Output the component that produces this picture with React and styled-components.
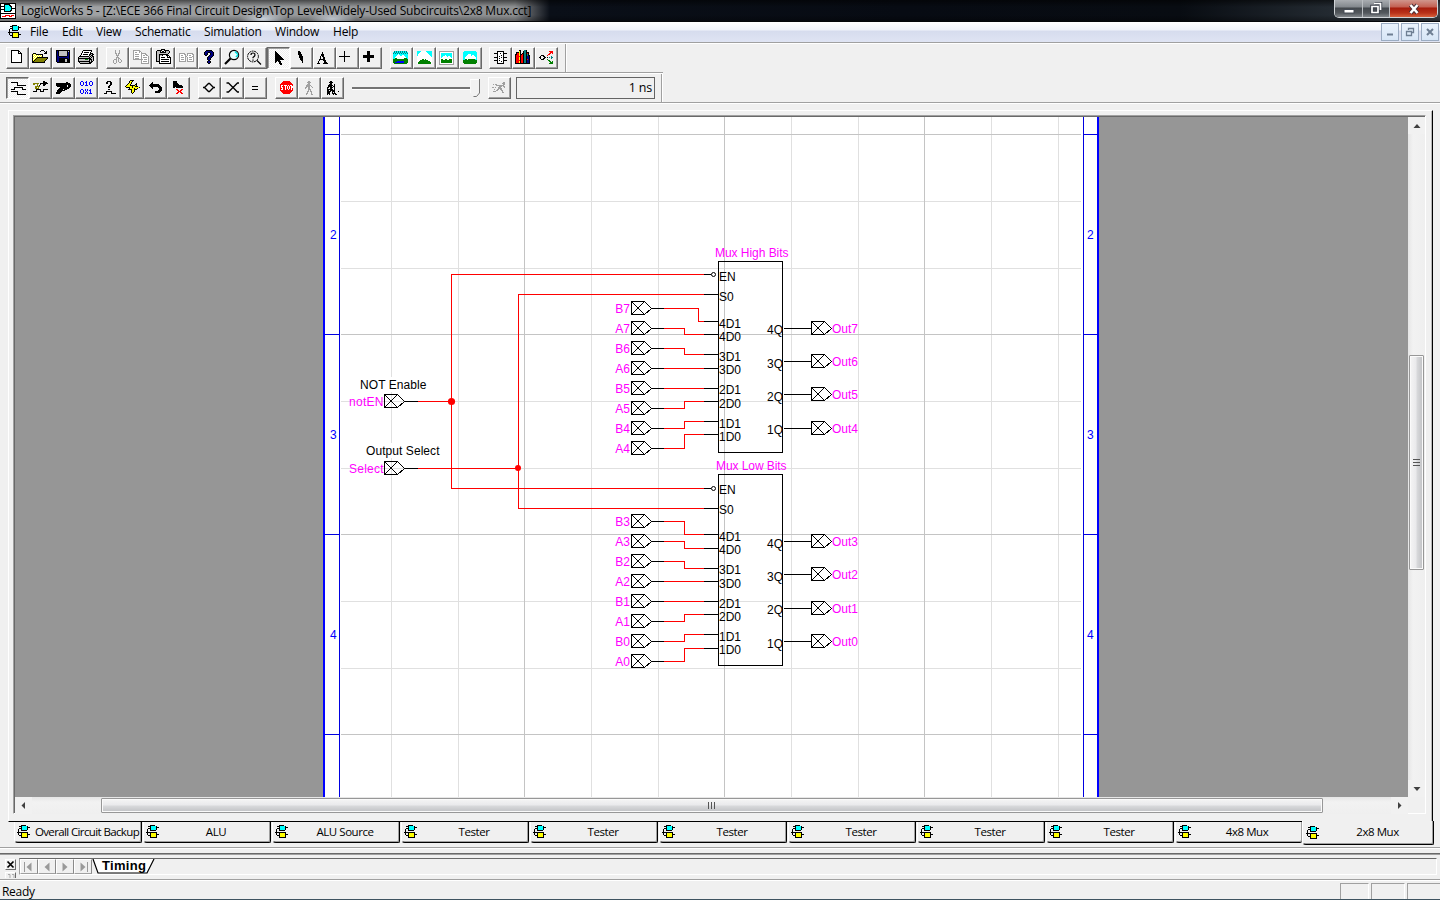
import React from "react";
import styled, { createGlobalStyle, css } from "styled-components";

const Global = createGlobalStyle`
  html, body { margin: 0; padding: 0; background: #f0f0f0; overflow: hidden; }
  * { box-sizing: border-box; }
  svg { display: block; flex: none; }
`;

const UI = `"Open Sans", "Noto Sans", sans-serif`;
const SANS = `"Liberation Sans", Arial, sans-serif`;

/* ---------- window frame ---------- */
const Window = styled.div`
  width: 1440px; height: 900px; display: flex; flex-direction: column;
  background: #f0f0f0; color: #000; overflow: hidden; font-family: ${UI};
`;
const TitleBar = styled.header`
  height: 22px; flex: none; display: flex; align-items: flex-start;
  border-bottom: 1px solid #05070a;
  background:
    radial-gradient(ellipse 24px 7px at 263px 19px, #dfe9f4cc, transparent),
    radial-gradient(ellipse 24px 7px at 332px 19px, #dfe9f4aa, transparent),
    linear-gradient(to bottom, #0008 0, #0000 7px, #0000 15px, #0005 21px),
    linear-gradient(to right, #a3a5a7 0, #97999b 300px, #8e9092 515px, #4a4d52 533px, #0a0f18 550px, #070b13 900px, #080c12 1180px, #232a31 1330px, #3a4148 1440px);
`;
const AppIcon = styled.svg`margin-top: 3px;`;
const TitleText = styled.div`
  font-size: 12px; line-height: 21px; letter-spacing: -0.18px; white-space: pre; padding-left: 5px; flex: 1;
`;
const Caption = styled.div`
  display: flex; height: 18px; margin-right: 2px; border: 1px solid #d0d4d8; border-top: 0;
  border-radius: 0 0 5px 5px; overflow: hidden;
`;
const CaptionButton = styled.div`
  width: ${p => p.$w}px; height: 17px; display: flex; align-items: center; justify-content: center;
  border-right: ${p => (p.$close ? 0 : "1px solid #b9bdc1")};
  background: ${p => p.$close
    ? "linear-gradient(#d0968c 0, #c36052 7px, #a61c0c 8px, #b8321a 13px, #d8603c 17px)"
    : "linear-gradient(#a9adb1 0, #83888d 7px, #43484d 8px, #53585d 13px, #82878b 17px)"};
`;
const MenuBar = styled.nav`
  height: 22px; flex: none; display: flex; align-items: center; padding: 0 1px 2px 8px;
  border-bottom: 1px solid #fff; box-shadow: inset 0 -1px 0 #a0a0a0;
  background: linear-gradient(#fff 0, #f0f3fa 8px, #d6dcee 9px, #dfe4f3 20px);
`;
const MenuItem = styled.div`
  font-size: 12px; line-height: 18px; width: ${p => p.$w}px; letter-spacing: -0.2px; white-space: nowrap;
`;
const MdiButton = styled.div`
  width: 18px; height: 18px; margin-left: 2px; border: 1px solid #9bacc2; background: linear-gradient(#e9f2fc, #d7e6f6);
  display: flex; align-items: center; justify-content: center;
`;
const Fill = styled.div`flex: 1;`;

/* ---------- tool bars ---------- */
const Toolbar = styled.div`
  width: ${p => p.$w}px; height: 30px; flex: none; display: flex; padding: 3px 0 0 6px;
  border-bottom: 1px solid #fff; box-shadow: inset 0 -1px 0 #a0a0a0;
`;
const ToolbarEnd = styled.div`
  width: 2px; height: 28px; margin: -3px 0 0 ${p => p.$gap}px; background: linear-gradient(to right, #a0a0a0 50%, #fff 50%);
`;
const Group = styled.div`display: flex; margin-right: ${p => p.$gap ?? 8}px;`;
const ToolButton = styled.div`
  width: 23px; height: 22px; border-style: solid; border-width: 1px;
  border-color: #fff #696969 #696969 #fff; box-shadow: inset -1px -1px 0 #a0a0a0; background: #f0f0f0;
  svg { margin: -1px; }
  ${p => p.$on && css`
    border-color: #696969 #fff #fff #696969; box-shadow: inset 1px 1px 0 #a0a0a0;
    background: repeating-conic-gradient(#fff 0 25%, #f0f0f0 0 50%) 0 0 / 2px 2px;
  `}
`;
const SliderTrack = styled.div`
  width: 118px; height: 3px; margin: 10px 0 0 0; border-top: 2px solid #737373; border-bottom: 1px solid #fff;
`;
const DelayField = styled.div`
  width: 139px; height: 22px; border: 1px solid #646464; margin-left: 5px; padding-right: 2px; text-align: right;
  font-size: 12.5px; line-height: 19px; letter-spacing: -0.2px;
`;

/* ---------- document area ---------- */
const Workspace = styled.main`height: 743px; flex: none; padding: 6px 0 0 8px;`;
const Frame = styled.section`
  width: 1425px; height: 712px; padding: 4px; border: 1px solid #fff;
  border-right-color: #000; border-bottom-color: #000; box-shadow: inset -1px 0 0 #b8b8b8;
`;
const Sunken = styled.div`
  width: 1413px; height: 699px; padding: 1px 0 0 1px; border: 1px solid;
  border-color: #a0a0a0 #fff #fff #a0a0a0; box-shadow: inset 1px 1px 0 #696969;
  display: grid; grid-template: 680px 17px / 1393px 17px; background: #f0f0f0;
`;
const ScrollV = styled.div`
  background: linear-gradient(to right, #e6e6e6, #f2f2f2 30%, #efefef); display: flex; flex-direction: column; align-items: center;
`;
const ScrollH = styled.div`
  background: linear-gradient(#e6e6e6, #f2f2f2 30%, #efefef); display: flex; align-items: center;
`;
const Gap = styled.div`flex: 0 0 ${p => p.$s}px;`;
const Thumb = styled.div`
  display: flex; align-items: center; justify-content: center; border: 1px solid #979797; border-radius: 1px;
  box-shadow: inset 0 0 0 1px #fafafa; width: ${p => p.$w}px; height: ${p => p.$h}px;
  background: linear-gradient(${p => (p.$v ? "to right" : "to bottom")}, #f5f5f5 0, #e9e9eb 48%, #d9dadc 52%, #c0c1c4 100%);
`;
const ArrowCell = styled.div`
  width: 17px; height: 17px; display: flex; align-items: center; justify-content: center; background: #f1f1f1;
`;
const Tabs = styled.div`display: flex; padding-left: 6px; height: 24px;`;
const Tab = styled.div`
  width: 128px; height: 21px; margin-right: 1px; display: flex; align-items: center; padding: 0 0 1px 2px;
  border: 1px solid #000; border-top: 0; border-left-color: #fff; border-radius: 0 0 2px 4px;
  box-shadow: inset -1px -1px 0 #a0a0a0;
  ${p => p.$last && css`border-right: 0; width: 127px; margin-right: 0; padding-right: 2px;`}
  ${p => p.$active && css`
    width: 132px; height: 24px; margin: -1px 0 0; padding-left: 3px; background: #f0f0f0;
  `}
`;
const TabLabel = styled.span`
  flex: 1; text-align: center; font-size: 11.5px; line-height: 18px; white-space: nowrap;
  margin-left: 3px; letter-spacing: ${p => p.$ls}px;
`;

/* ---------- docked pane and status ---------- */
const Dock = styled.div`
  height: 34px; flex: none; border-top: 1px solid #a0a0a0;
  padding: 5px 3px 0 5px; border-bottom: 1px solid #fff; box-shadow: inset 0 1px 0 #fff, inset 0 -1px 0 #a0a0a0;
`;
const DockLine = styled.div`height: 2px; margin: 0 -3px 0 -5px; background: linear-gradient(#696969 50%, #a0a0a0 50%);`;
const DockRow = styled.div`display: flex; margin-top: 3px; height: 20px;`;
const Grips = styled.div`width: 14px; padding-top: 1px; height: 20px; overflow: hidden;`;
const SmallButton = styled.div`
  width: 11px; height: ${p => p.$h || 11}px; border: 1px solid; border-color: #fff #696969 #696969 #fff; margin-bottom: 2px;
`;
const PaneBody = styled.div`
  flex: 1; display: flex; height: 17px; border: 1px solid #a0a0a0; border-top-color: #696969;
  border-right-color: #fff; border-bottom-color: #fff;
`;
const NavButton = styled.div`
  width: 18px; height: 15px; border: 1px solid; border-color: #fff #8a8a8a #a0a0a0 #fff; display: flex; align-items: center; justify-content: center;
`;
const StatusBar = styled.footer`
  height: 19px; flex: none; display: flex; padding: 2px 0 0 2px; border-bottom: 1px solid #3e5360; font-size: 12px; line-height: 17px;
  letter-spacing: -0.3px;
`;
const StatusCell = styled.div`
  width: ${p => p.$w}px; height: 16px; margin-right: ${p => p.$mr ?? 2}px; border: 1px solid #a0a0a0; border-right-color: #fff; border-bottom: 0;
`;

/* ---------- pixel icons ---------- */
const COLORS = {
  k: "#000", w: "#fff", y: "#ffff00", o: "#808000", n: "#000080", g: "#a0a0a0", r: "#ff0000",
  c: "#00ffff", G: "#008000", b: "#0000ff", t: "#008080", s: "#c0c0c0",
};
function Pixels({ rows, x = 0, y = 0 }) {
  const paths = {};
  rows.forEach((row, j) => {
    for (let i = 0; i < row.length;) {
      const ch = row[i];
      let n = 1;
      while (row[i + n] === ch) n++;
      if (COLORS[ch]) paths[ch] = (paths[ch] || "") + `M${x + i} ${y + j}h${n}v1h-${n}z`;
      i += n;
    }
  });
  return <g shapeRendering="crispEdges">{Object.entries(paths).map(([c, d]) => <path key={c} d={d} fill={COLORS[c]} />)}</g>;
}
const Glyph = ({ children }) => <svg width="23" height="22" viewBox="0 0 23 22">{children}</svg>;

const GATES = [
  "....kkkkk....",
  "..kkkccccck..",
  "....kccccckkk",
  "..kkkccccck..",
  ".k..kccccck..",
  ".k..kkkkkk...",
  ".k...........",
  "kkkkkkkkkkk..",
  ".k..kyyyyyk..",
  ".k..kyyyyykkk",
  "..kkkyyyyyk..",
  "....kyyyyyk..",
  "....kkkkkkk..",
];
const GateIcon = () => <svg width="13" height="13" viewBox="0 0 13 13"><Pixels rows={GATES} /></svg>;

const NEW = [
  "kkkkkkkk...", "kwwwwwwkk..", "kwwwwwwkwk.", "kwwwwwwkkkk", "kwwwwwwwwwk", "kwwwwwwwwwk", "kwwwwwwwwwk",
  "kwwwwwwwwwk", "kwwwwwwwwwk", "kwwwwwwwwwk", "kwwwwwwwwwk", "kwwwwwwwwwk", "kkkkkkkkkkk",
];
const OPEN = [
  ".........kkk....", "........k...k.k.", ".............kk.", ".kkk........kkk.", "kywykkkkkkk.....", "kwywywywywk.....",
  "kywywywywyk.....", "kwywykkkkkkkkkkk", "kywykooooooooook", "kwykooooooooook.", "kykooooooooook..", "kkooooooooook...", "kkkkkkkkkkkkk...",
];
const SAVE = [
  "kkkkkkkkkkkkkk", "knkssssssssksk", "knkssssssssknk", "knkssssssssknk", "knkssssssssknk", "knkssssssssknk", "knnkkkkkkkknnk",
  "knnnnnnnnnnnnk", "knnkkkkkkkkknk", "knnkkkkkksskkk", "knnkkkkkksskkk", "knnkkkkkksskkk", ".kkkkkkkkkkkkk",
];
const PRINT = [
  ".....kkkkkkkkk..", "....kwwwwwwwwk..", "....kwkkkkkwk...", "...kwwwwwwwwkkk.", "...kwkkkkkwkkskk", "..kwwwwwwwwkskk.",
  ".kkkkkkkkkkskskk", "kssssssssssksksk", "kkkkkkkkkkkkkssk", "kssssssGGGskkksk", "kssssssssssksksk", "kkkkkkkkkkkkskk.", ".kssssssssskkk..", "..kkkkkkkkkkk...",
];
const CUT = [
  "...g...g..", "...g...g..", "...g...g..", "...gg.gg..", "....g.g...", "....ggg...", ".....g....", "....ggg...", "....g.gg..",
  "..ggg.g.g.", ".g..g.g..g", ".g..g.g..g", ".g..g..gg.", "..gg......",
];
const COPY = [
  "ggggggg.........", "gwwwwwgg........", "gwggwwgwg.......", "gwwwwwwwggggg...", "gwggggwwgwwwgg..", "gwwwwwwwgwggwgg.",
  "gwggggwwgwwwwwwg", "gwwwwwwwgwggggwg", "gwggggwwgwwwwwwg", "ggggggggggwgggwg", "........gwwwwwwg", "........gwggggwg", "........gwwwwwwg", "........gggggggg",
];
const PASTE = [
  ".....kkkk.......", ".kkkkk..kkkkk...", "ksssk.kk.ksssk..", "kssskkkkkksssk..", "ksssssssssssk...", "ksskkkkkkkkk....", "kssksskwwwkkk...",
  "ksskwwwwwwwkwk..", "ksskwkkkkwwkkkk.", "ksskwwwwwwwwwwk.", "ksskwkkkkkkkkwk.", "ksskwwwwwwwwwwk.", "kkkkwkkkkkkkkwk.", "...kwwwwwwwwwwk.", "...kkkkkkkkkkkk.",
];
const PAIR = [
  "gggggg..gggggg..", "gwwwwgg.gwwwwgg.", "gwggwwg.gwggwwg.", "gwwwwwggwwwwwgg.", "gwgggwg.gwgggwg.", "gwwwwwg.gwwwwwg.",
  "gwgggwg.gwgggwg.", "gwwwwwg.gwwwwwg.", "ggggggg.ggggggg.",
];
const HELP = [
  "..kkkkkk..", ".knnnnnnk.", "knnnkknnnk", "knnk..knnk", "knnk..knnk", ".kk..knnnk", "....knnnk.", "...knnnk..",
  "...knnk...", "...knnk...", "....kk....", "...knnk...", "...knnk...", "....kk....",
];
const ARROW = [
  "k........", "kk.......", "kkk......", "kkkk.....", "kkkkk....", "kkkkkk...", "kkkkkkk..", "kkkkkkkk.", "kkkkkkkkk",
  "kkkkk....", "kk.kkk...", "k...kk...", "....kkk..", ".....kk..",
];
const PEN = ["kk....", "kkk...", "kkk...", "kkkk..", ".kkk..", ".kkkk.", ".kkkk.", "..kkk.", "..kkk.", "...kk.", "....k.", "....k."];
const BIGA = [
  ".....k.....", ".....k.....", "....kkk....", "....kkk....", "...k.kk....", "...k..kk...", "...k..kk...", "..kkkkkk...", "..k...kkk..", ".k.....kk..", ".k.....kkk.", "kkk...kkkkk",
];
const PLUS = [".....k.....", ".....k.....", ".....k.....", ".....k.....", ".....k.....", "kkkkkkkkkkk", ".....k.....", ".....k.....", ".....k.....", ".....k.....", ".....k....."];
const BOLDPLUS = ["....kkk....", "....kkk....", "....kkk....", "....kkk....", "kkkkkkkkkkk", "kkkkkkkkkkk", "kkkkkkkkkkk", "....kkk....", "....kkk....", "....kkk....", "....kkk...."];
const SCENE1 = [
  ".tctctctctctct.", "ctctctctctctctc", "tctctctctctctct", "cccccwccccccccc", "ccccwwwccwwcccc", "cccwwwwwwwwwccc", "ccwwwwwwwwwwwcc", "ccGGwwwwwwwGGGc",
  "GGGGGGGGGGGGGGG", "GGGGGGGGGGGGGGG", "GGGGbbbbbbbGGGG", "GGbbbbbbbbbGGGG", ".GGGGGGGGGGGGG.",
];
const SCENE2 = [
  "ccccwwwwwcccccc", "cccwwwwwwwccccc", "ccwwwwwwwwwcccc", "cwwwwwwwwwwwccc", "cwwwwwwwwwwwwcc", "wwwwwwwwwwwwwwc", "wwwwwwwwwwwwwww", "wwwwwwwwwwwwwww",
  "wwwwwGGwGwwwwww", "wwwGGGGGGGGwwww", "wwGGGGGGGGGGGww", "wGGGGGGGGGGGGGw", "wGGGGGGGGGGGGGw",
];
const SCENE3 = [
  "ggggggggggggggg", "gwwwwwwwwwwwwwg", "gwcccccccccccwg", "gwcccccccccccwg", "gwccccwccccccwg", "gwccwwwwcwwccwg", "gwcwwwwwwwwwcwg", "gwwwwwwwwwwwwwg",
  "gwGGwwGGwwGGGwg", "gwGGGGGGGGGGGwg", "gwGGGGGGGGGGGwg", "gwGGGGGGGGGGGwg", "gwwwwwwwwwwwwwg", "ggggggggggggggg",
];
const SCENE4 = [
  ".cccccccccccc.", "cccccccccccccc", "cccccccccccccc", "cccccwwwcccccc", "ccccwwwwcwwccc", "cccwwwwwwwwwcc", "ccwwwwwwwwwwwc", "ccwwwwwwwwwwwc",
  "ccGGwGGGGGGGcc", "GGGGGGGGGGGGGG", "GGGGGGGGGGGGGG", "GGGGGGGGGGGGGG", ".GGGGGGGGGGGG.",
];
const CHIP = [
  "...kkkkkkk...", "...kwwwwwk...", "kkkkwwkwwkkkk", "...kwwwwwk...", "...kwwwkwk...", "...kwkwwwk...", "kkkkwwwkwkkkk", "...kwkwwwk...",
  "...kwwwwwk...", "kkkkwkwwwkkkk", "...kwwwkwk...", "...kwwwwwk...", "...kkkkkkk...",
];
const BOOKS = [
  "....kk...ttk....", "....yk..kttk....", ".kkkyk..kttkkk..", ".krryk.kkttkrk..", "kkrrykkrkttktk..", "krrrykrrkttktkk.", "krrrrkrrkttknnk.",
  "krrrykrrkttknnk.", "krrrykrrkttknnk.", "krrrykrrkttkrnk.", "krrrrkrrkttknnk.", "krrrykrrkttknnk.", "krrrykrrkttknnk.", "kkkkkkkkkkkkkkk.",
];
const SPLIT = [
  "..........rrrr", "...........rrr", "..........rr.r", ".........rr...", "..kkk...r.....", ".k..kk......t.", "kk...kk.k.t.tt", ".k..kk......t.",
  "..kkk...G.....", ".........GG...", "..........GG.G", "...........GGG", "..........GGGG",
];
const WAVE = [
  "kkkkkkk........", "......k........", "......k........", "......kkkkkkkkk", "...............", "...kkkkkkkkk...", "...k.......k...",
  "kkkk.......kkkk", "...............", "kkkkkkk........", "......k........", "......k........", "......kkkkkkkkk",
];
const PROBE = [
  "..........kk...", "..........kkkk.", "oooooo.kkkkkkkk", "oo..o..k..kkk..", "....o.k...kk...", "..ooooo........", "..oo.o.........", "..oooo.........",
  "...kkkkk..kkkkk", "...k...k..k....", "kkkk...kkkk....", "...............",
];
const GUN = [
  "..........kk...", "kkkkkkkkkkkkkk.", "kkkkkkkkkkkkkkk", "kkkkkkkkkkk.kkk", ".kkkkkkkkkk.kkk", "....kkkkkkkkkk.", "...kkkkkkkkkk..",
  "..kkkkk.kkk....", ".kkkkkkkk......", ".kkkkk.........", "kkkkk..........", "kkkk...........",
];
const BITS = [
  ".bb...b...bb.", "b..b.bb..b..b", "b..b..b..b..b", "b..b..b..b..b", ".bb..bbb..bb.", ".............", ".............", ".............",
  ".bb..b.b..b..", "b..b.b.b.bb..", "b..b..b...b..", "b..b.b.b..b..", ".bb..b.b.bbb.",
];
const WHAT = [
  "...kkkk.....", "..kk..kk....", "..kk..kk....", "......kk....", ".....kk.....", "....kk......", "....kk......", "............",
  "....kk......", "............", "..kkkkkk....", "..k....k....", "kkk....kkkkk",
];
const BOLT = [
  ".....kkkk......", "....kyyk.......", "....kyk........", "...kyyk....k...", "..kyyk....kk...", ".kyyykkkkkyk...", "kyyyyyykyykkk.", ".kkkkyykyyyyyyk",
  "....kyyyykyyk..", "...kkkkyykkk...", "......kyyk.....", "......kyyk.....", "......kyk......", ".......k.......",
];
const UNDO = [
  "...k.........", "..kk.........", ".kkkkkkkkk...", "kkkkkkkkkkk..", ".kkkkkkkkkkk.", "..kk.....kkkk", "...k......kkk", "..........kkk", ".........kkkk", "......kkkkkk.", "......kkkkk..",
];
const BOOT = [
  "kkkk........", "kkkk........", "kkkkk.......", "kkkkkk......", "kkkkkkkkk...", "kkkkkkkkkk..", "kk.kkkkkkk..", "............", "...rr...rr..", "....rr.rr...", ".....rrr....", "....rr.rr...", "...rr...rr..",
];
const STOP = [
  "...rrrrrrr...", "..rrrrrrrrr..", ".rrrrrrrrrrr.", "rrrrrrrrrrrrr", "rwwrwwwrwrwwr", "rwrrrwrwrwrww", "rwwrrwrwrwrww", "rrwrrwrwrwrwr",
  "rwwrrwrrwrrwr", "rrrrrrrrrrrrr", ".rrrrrrrrrrr.", "..rrrrrrrrr..", "...rrrrrrr...",
];
const WALK = [
  "...gg...", "..gggg..", "...gg...", "..ggg...", ".ggggg..", ".gggg.g.", "gg.gg..g", "g..gg...", "...ggg..", "...g.g..", "..gg.gg.", "..g...g.", ".gg...g.", ".g....gg",
];
const WALKB = [
  "...kk.......", "..kkkk......", "...kk.......", "..kkk..k....", ".kkkkk.k....", ".kkkk.kk....", "kk.kkk.k....", "k..kk..k....", "kkkkkk.k....",
  "kk.kkkkk....", "kkkk.kkk...k", "kkk..k.k....", "kkk..kkkk...", "k.k...k.kk..",
];
const RUN = [
  "...........gg..", "..........ggg..", ".g.gg......gg..", "....gggggggg...", ".......ggg.gg..", "gg.g..ggg...g..", "......gggg.....", "..g..gg.gg.....", "....gg...gg....", ".ggg......g....", "..........gg...",
];

const Zoomer = () => (
  <Glyph>
    <circle cx="13" cy="8" r="4.6" fill="#e8ffff" stroke="#000" strokeWidth="1.2" />
    <path d="M14 4.5l3 3M15 10l2-2" stroke="#00e0e0" strokeWidth="1.6" />
    <path d="M9.5 11.5L4 17" stroke="#000" strokeWidth="2.2" />
  </Glyph>
);
const ZoomHelp = () => (
  <Glyph>
    <circle cx="9" cy="9.5" r="5.4" fill="none" stroke="#000" strokeDasharray="2 .6" />
    <path d="M13 13.5l4 4M7 8q0-2 2-2t2 2q0 1-2 2.5v.8M9 12.5v1.2" fill="none" stroke="#000" strokeWidth="1.2" />
  </Glyph>
);
const bmp = (rows, x, y) => <Glyph><Pixels rows={rows} x={x} y={y} /></Glyph>;

const FILE_TOOLS = [bmp(NEW, 5, 3), bmp(OPEN, 3, 3), bmp(SAVE, 4, 3), bmp(PRINT, 3, 3)];
const EDIT_TOOLS = [
  bmp(CUT, 6, 3), bmp(COPY, 4, 3), bmp(PASTE, 4, 2), bmp(PAIR, 4, 6), bmp(HELP, 6, 3), <Zoomer />, <ZoomHelp />,
  bmp(ARROW, 8, 4), bmp(PEN, 8, 4), bmp(BIGA, 4, 5), bmp(PLUS, 3, 4), bmp(BOLDPLUS, 4, 4),
];
const VIEW_TOOLS = [bmp(SCENE1, 3, 4), bmp(SCENE2, 4, 4), bmp(SCENE3, 3, 4), bmp(SCENE4, 4, 4)];
const PART_TOOLS = [bmp(CHIP, 5, 4), bmp(BOOKS, 3, 3), bmp(SPLIT, 4, 4)];
const SIM_TOOLS = [bmp(WAVE, 5, 5), bmp(PROBE, 4, 4), bmp(GUN, 4, 5), bmp(BITS, 5, 4), bmp(WHAT, 6, 4), bmp(BOLT, 4, 3), bmp(UNDO, 5, 5), bmp(BOOT, 6, 4)];
const TRACE_TOOLS = [
  <Glyph key="d"><path d="M5 10.5h1.5l4-4h1l4 4-4 4h-1l-4-4M15.5 10.5H17" fill="none" stroke="#000" strokeWidth="1.3" /></Glyph>,
  <Glyph key="x"><path d="M5.500 6h2l4.500 4.500L16.500 6h1.500M5.500 15h2l4.500-4.500 4.500 4.500h1.500" fill="none" stroke="#000" strokeWidth="1.3" /></Glyph>,
  <Glyph key="e"><path d="M8 9.5h6M8 12.5h6" stroke="#000" shapeRendering="crispEdges" /></Glyph>,
];
const RUN_TOOLS = [bmp(STOP, 5, 4), bmp(WALK, 7, 4), bmp(WALKB, 6, 4)];

const Buttons = ({ icons, gap, pressed }) => (
  <Group $gap={gap}>
    {icons.map((icon, i) => <ToolButton key={i} $on={i === pressed}>{icon}</ToolButton>)}
  </Group>
);

/* ---------- schematic ---------- */
const HIGH = {
  title: "Mux High Bits", tx: 715, tw: 73.5, ty: 257, top: 261, en: 274, enText: 281, sel: 294, selText: 301,
  ins: [
    ["B7", 308, 321, "4D1", 328, 698], ["A7", 328, 334, "4D0", 341], ["B6", 348, 354, "3D1", 361], ["A6", 368, 368, "3D0", 374],
    ["B5", 388, 388, "2D1", 394], ["A5", 408, 401, "2D0", 408], ["B4", 428, 421, "1D1", 428], ["A4", 448, 434, "1D0", 441],
  ],
  outs: [["Out7", 328, "4Q", 334], ["Out6", 361, "3Q", 368], ["Out5", 394, "2Q", 401], ["Out4", 428, "1Q", 434]],
};
const LOW = {
  title: "Mux Low Bits", tx: 716, tw: 70.5, ty: 470, top: 474, en: 488, enText: 494, sel: 508, selText: 514,
  ins: [
    ["B3", 521, 534, "4D1", 541], ["A3", 541, 548, "4D0", 554], ["B2", 561, 568, "3D1", 574], ["A2", 581, 581, "3D0", 588],
    ["B1", 601, 601, "2D1", 608], ["A1", 621, 614, "2D0", 621], ["B0", 641, 634, "1D1", 641], ["A0", 661, 648, "1D0", 654],
  ],
  outs: [["Out3", 541, "4Q", 548], ["Out2", 574, "3Q", 581], ["Out1", 608, "2Q", 614], ["Out0", 641, "1Q", 648]],
};
const Schematic = styled.svg`
  background: #969696; font-family: ${SANS}; font-size: 12px;
  .line { fill: none; stroke-width: 1; shape-rendering: crispEdges; stroke-linecap: square; }
`;
const L = ({ d, c = "#000" }) => <path className="line" d={d} stroke={c} transform="translate(.5 .5)" />;
const Port = ({ x, y }) => (
  <g>
    <path className="line" d={`M${x} ${y - 7}h13l7 7l-7 6h-13z`} stroke="#000" transform="translate(.5 .5)" />
    <path d={`M${x + 0.5} ${y - 6.5}l13 13m-13 0l13 -13`} stroke="#000" strokeWidth="1" fill="none" />
  </g>
);
function Mux({ m }) {
  return (
    <g>
      <L d={`M718 ${m.top}h64v191h-64z`} />
      <text x={m.tx} y={m.ty} textLength={m.tw} fill="#ff00ff">{m.title}</text>
      <L d={`M704 ${m.en}h6`} />
      <circle cx="713.5" cy={m.en + 0.5} r="2" fill="#fff" stroke="#000" />
      <text x="719" y={m.enText}>EN</text>
      <L d={`M704 ${m.sel}h14`} />
      <text x="719" y={m.selText}>S0</text>
      {m.ins.map(([name, y, ty, pin, by, mid = 684]) => (
        <g key={name}>
          <text x="630" y={y + 5} textAnchor="end" fill="#ff00ff">{name}</text>
          <Port x={631} y={y} />
          <L d={`M652 ${y}h11`} />
          <L c="#ff0000" d={`M664 ${y}H${mid}V${ty}H703`} />
          <L d={`M704 ${ty}h14`} />
          <text x="719" y={by}>{pin}</text>
        </g>
      ))}
      {m.outs.map(([name, y, pin, by]) => (
        <g key={name}>
          <text x="783" y={by} textAnchor="end">{pin}</text>
          <L d={`M784 ${y}h27`} />
          <Port x={811} y={y} />
          <text x="832" y={y + 5} fill="#ff00ff">{name}</text>
        </g>
      ))}
    </g>
  );
}
const MINOR_X = [391, 458, 591, 658, 791, 858, 991, 1058];
const MAJOR_X = [524, 724, 924];
const MINOR_Y = [201, 268, 401, 468, 601, 668];
const MAJOR_Y = [134, 334, 534, 734];
function Circuit() {
  return (
    <Schematic width="1393" height="680" viewBox="15 117 1393 680">
      <rect x="323" y="117" width="776" height="680" fill="#fff" />
      <L c="#e0e0e0" d={MINOR_X.map(x => `M${x} 116V797`).join("") + MINOR_Y.map(y => `M341 ${y}H1080`).join("")} />
      <L c="#c4c4c4" d={MAJOR_X.map(x => `M${x} 116V797`).join("") + MAJOR_Y.map(y => `M341 ${y}H1080`).join("")} />
      <path d="M323 117h2v680h-2zM1097 117h2v680h-2z" fill="#0000ff" shapeRendering="crispEdges" />
      <L c="#0000e0" d={"M339 116V797M1083 116V797" + MAJOR_Y.map(y => `M325 ${y}h14M1083 ${y}h14`).join("")} />
      {[2, 3, 4].map((n, i) => (
        <g key={n} fill="#0000ff">
          <text x="330" y={239 + i * 200}>{n}</text>
          <text x="1087" y={239 + i * 200}>{n}</text>
        </g>
      ))}
      <path d="M359 377h69v15h-69zM365 443h75v15h-75z" fill="#fff" />
      <text x="360" y="389" textLength="66.5">NOT Enable</text>
      <text x="366" y="455" textLength="73.5">Output Select</text>
      <text x="349" y="406" textLength="34.5" fill="#ff00ff">notEN</text>
      <text x="349" y="473" textLength="34.5" fill="#ff00ff">Select</text>
      <L d="M404 401h13M404 468h13" />
      <L c="#ff0000" d="M418 401H451M703 274H451V488H703M418 468H518M703 294H518V508H703" />
      <Port x={384} y={401} />
      <Port x={384} y={468} />
      <circle cx="451.5" cy="401.5" r="3.6" fill="#ff0000" />
      <circle cx="518" cy="468" r="3" fill="#ff0000" />
      <Mux m={HIGH} />
      <Mux m={LOW} />
    </Schematic>
  );
}

const Arrow = ({ d }) => <svg width="9" height="9" viewBox="0 0 9 9"><path d={d} fill="#404040" /></svg>;
const Grip = ({ v }) => (
  <svg width="8" height="8" viewBox="0 0 8 8" shapeRendering="crispEdges">
    <path d={v ? "M0 0h7M0 3h7M0 6h7" : "M0 0v7M3 0v7M6 0v7"} stroke="#555" transform={v ? "translate(0 .5)" : "translate(.5 0)"} />
  </svg>
);
const NavArrow = ({ bar, flip }) => (
  <svg width="12" height="12" viewBox="0 0 12 12" transform={flip ? "scale(-1 1)" : undefined}>
    <path d="M8.5 1.5v9l-5-4.5z" fill="#999" />{bar && <path d="M1.5 1v10" stroke="#999" />}
  </svg>
);

const MENUS = [["File", 32], ["Edit", 34], ["View", 39], ["Schematic", 69], ["Simulation", 71], ["Window", 58], ["Help", 40]];
const DOCS = ["Overall Circuit Backup", "ALU", "ALU Source", "Tester", "Tester", "Tester", "Tester", "Tester", "Tester", "4x8 Mux", "2x8 Mux"];

export default function App() {
  return (
    <Window>
      <Global />
      <TitleBar>
        <AppIcon width="16" height="16" viewBox="0 0 16 16" shapeRendering="crispEdges">
          <path d="M0 0h16v16H0z" fill="#fff" />
          <path d="M.5 .5h15v15H.5zM0 10.5h16M1 3.5h4M1 6.5h4M11 5.5h4" fill="none" stroke="#000" />
          <path d="M4.5 1.5h4q3 1 3 4t-3 3h-4z" fill="#00ffff" stroke="#000" />
          <path d="M2 13.5h3v-1h4v1h2v-1h3" fill="none" stroke="#f00" />
        </AppIcon>
        <TitleText>{"LogicWorks 5 - [Z:\\ECE 366 Final Circuit Design\\Top Level\\Widely-Used Subcircuits\\2x8 Mux.cct]"}</TitleText>
        <Caption>
          <CaptionButton $w={28}><svg width="14" height="12" viewBox="0 0 14 12"><rect x="2" y="6.5" width="10" height="3.5" fill="#fff" stroke="#444b55" /></svg></CaptionButton>
          <CaptionButton $w={27}>
            <svg width="14" height="13" viewBox="0 0 14 13"><path d="M5.5 1.5h6v6M3 4.5h6v6H3z" fill="none" stroke="#3c424c" strokeWidth="3.4" /><path d="M5 1.5h6.5v6.5M3 4.5h6v6H3z" fill="none" stroke="#fff" strokeWidth="1.7" /></svg>
          </CaptionButton>
          <CaptionButton $w={47} $close>
            <svg width="14" height="12" viewBox="0 0 14 12"><path d="M3.5 2l7 8M10.5 2l-7 8" stroke="#4a3038" strokeWidth="4.2" /><path d="M3.5 2l7 8M10.5 2l-7 8" stroke="#fff" strokeWidth="2.5" /></svg>
          </CaptionButton>
        </Caption>
      </TitleBar>
      <MenuBar>
        <GateIcon />
        <Gap $s={9} />
        {MENUS.map(([m, w]) => <MenuItem key={m} $w={w}>{m}</MenuItem>)}
        <Fill />
        <MdiButton><svg width="10" height="10" viewBox="0 0 10 10"><path d="M2 7.5h6" stroke="#6e7f93" strokeWidth="2" /></svg></MdiButton>
        <MdiButton><svg width="10" height="10" viewBox="0 0 10 10"><path d="M3.5 3V1.5h5v4H7M1.5 4.5h5v4h-5z" fill="none" stroke="#6e7f93" strokeWidth="1.3" /></svg></MdiButton>
        <MdiButton><svg width="10" height="10" viewBox="0 0 10 10"><path d="M2 2l6 6M8 2l-6 6" stroke="#6e7f93" strokeWidth="2" /></svg></MdiButton>
      </MenuBar>

      <Toolbar $w={663}>
        <Buttons icons={FILE_TOOLS} />
        <Buttons icons={EDIT_TOOLS} pressed={7} />
        <Buttons icons={VIEW_TOOLS} gap={7} />
        <Buttons icons={PART_TOOLS} gap={0} />
        <ToolbarEnd $gap={7} />
      </Toolbar>
      <Toolbar $w={1440}>
        <Buttons icons={SIM_TOOLS} pressed={0} />
        <Buttons icons={TRACE_TOOLS} />
        <Buttons icons={RUN_TOOLS} />
        <SliderTrack />
        <svg width="18" height="22" viewBox="0 0 18 22">
          <path d="M0 2.5h10v14l-5 4l-5-4z" fill="#f2f2f2" /><path d="M0 16V2.5h10" fill="none" stroke="#fff" />
          <path d="M9.5 2v14l-3 3.5h-3" fill="none" stroke="#777" />
        </svg>
        <Buttons icons={[bmp(RUN, 4, 5)]} gap={0} />
        <DelayField>1 ns</DelayField>
        <ToolbarEnd $gap={6} />
      </Toolbar>

      <Workspace>
        <Frame>
          <Sunken>
            <Circuit />
            <ScrollV>
              <ArrowCell><Arrow d="M5 3l3.5 4h-7z" /></ArrowCell>
              <Gap $s={221} />
              <Thumb $v $w={15} $h={215}><Grip v /></Thumb>
              <Fill />
              <ArrowCell><Arrow d="M5 7l3.5-4h-7z" /></ArrowCell>
            </ScrollV>
            <ScrollH>
              <ArrowCell><Arrow d="M2.5 4.5l3.5-3.5v7z" /></ArrowCell>
              <Gap $s={69} />
              <Thumb $w={1222} $h={15}><Grip /></Thumb>
              <Fill />
              <ArrowCell><Arrow d="M6.5 4.5l-3.5-3.5v7z" /></ArrowCell>
            </ScrollH>
          </Sunken>
        </Frame>
        <Tabs>
          {DOCS.map((d, i) => (
            <Tab key={i} $last={i === 9} $active={i === 10}>
              <GateIcon />
              <TabLabel $ls={i === 0 ? -0.62 : -0.45}>{d}</TabLabel>
            </Tab>
          ))}
        </Tabs>
      </Workspace>

      <Dock>
        <DockLine />
        <DockRow>
          <Grips>
            <SmallButton><svg width="9" height="9" viewBox="0 0 9 9"><path d="M1.5 1.5l6 6M7.5 1.5l-6 6" stroke="#000" strokeWidth="1.7" /></svg></SmallButton>
            <SmallButton $h={10}><svg width="9" height="9" viewBox="0 0 9 9"><path d="M2 1.5h2v6M6 1.5h2v6" fill="none" stroke="#aaa" /></svg></SmallButton>
          </Grips>
          <PaneBody>
            <NavButton><NavArrow bar /></NavButton>
            <NavButton><NavArrow /></NavButton>
            <NavButton><NavArrow flip /></NavButton>
            <NavButton><NavArrow bar flip /></NavButton>
            <svg width="64" height="15" viewBox="0 0 64 15">
              <path d="M1 0L6 14H55L62 0z" fill="#fff" />
              <path d="M1 0L6 14H55L62 0" fill="none" stroke="#000" strokeWidth="1.2" />
              <text x="10" y="11" fontFamily={SANS} fontWeight="700" fontSize="13" textLength="44">Timing</text>
            </svg>
          </PaneBody>
        </DockRow>
      </Dock>
      <StatusBar>
        <span>Ready</span>
        <Fill />
        <StatusCell $w={29} /><StatusCell $w={34} /><StatusCell $w={34} $mr={-1} />
      </StatusBar>
    </Window>
  );
}
